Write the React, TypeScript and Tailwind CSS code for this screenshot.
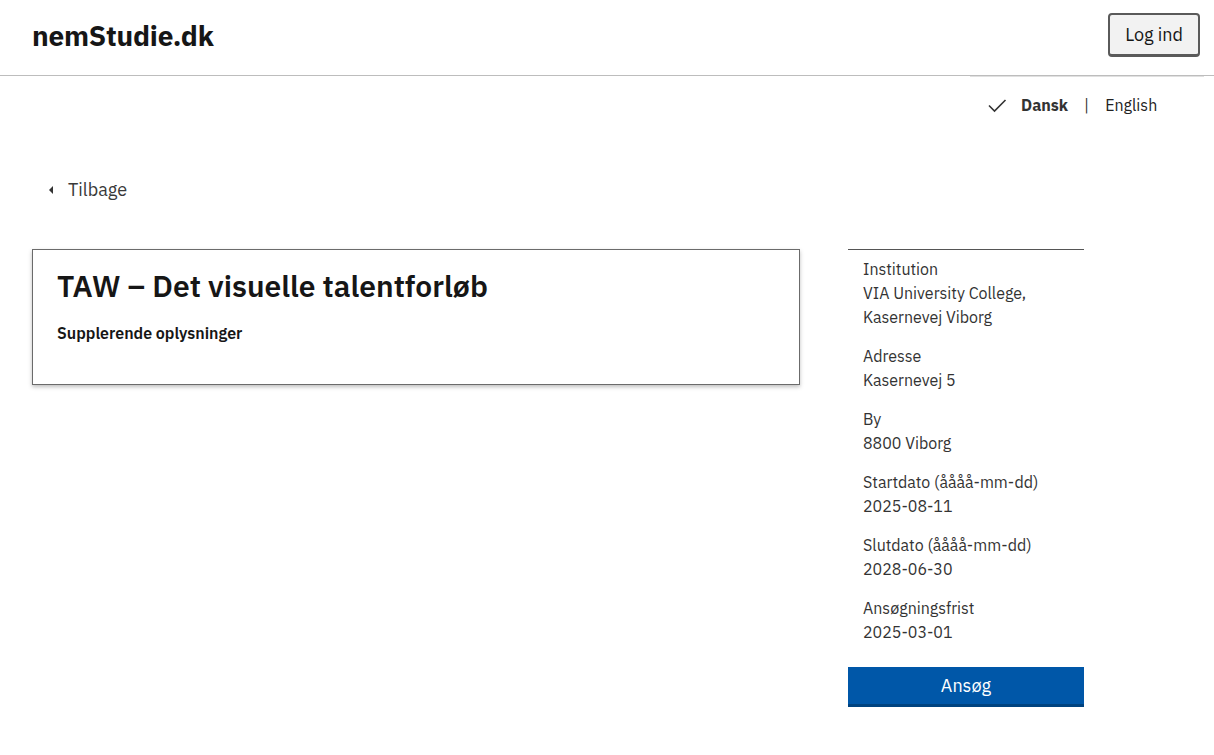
export default function App() {
  const facts = [
    { label: 'Institution', value: ['VIA University College,', 'Kasernevej Viborg'] },
    { label: 'Adresse', value: ['Kasernevej 5'] },
    { label: 'By', value: ['8800 Viborg'] },
    { label: 'Startdato (åååå-mm-dd)', value: ['2025-08-11'] },
    { label: 'Slutdato (åååå-mm-dd)', value: ['2028-06-30'] },
    { label: 'Ansøgningsfrist', value: ['2025-03-01'] },
  ];

  return (
    <div className="min-h-[755px] bg-white text-[#161616] font-['IBM_Plex_Sans','Roboto','Noto_Sans',sans-serif]">
      <header className="h-[76px] border-b border-[#bdbdbd] flex items-center justify-between pl-8 pr-[14px]">
        <h1 className="text-[28px] font-bold tracking-[-0.2px] mt-[-4px]">nemStudie.dk</h1>
        <button className="h-[44px] px-[15px] mt-[-6px] bg-[#f2f2f2] border-2 border-[#5a5a5a] border-b-[3px] rounded-[4px] text-[18px] text-[#161616]">
          Log ind
        </button>
      </header>

      <div className="flex justify-end pr-[10px]">
        <div className="w-[234px] border-t border-[#e0e0e0] pt-[16px] flex items-center text-[16px]">
          <svg width="20" height="20" viewBox="0 0 20 20" className="ml-[17px] mr-[14px]">
            <path d="M2 10.5 L7.5 16 L18.5 5" fill="none" stroke="#333" strokeWidth="1.6" />
          </svg>
          <span className="font-bold text-[#333]">Dansk</span>
          <span className="mx-[16px] text-[#333]">|</span>
          <span className="text-[#222]">English</span>
        </div>
      </div>

      <div className="pl-[48px] mt-[59px] flex items-center text-[18px] text-[#393939]">
        <svg width="6" height="10" viewBox="0 0 6 10" className="mr-[14px]">
          <path d="M5 1 L1 5 L5 9 Z" fill="#333" />
        </svg>
        <span>Tilbage</span>
      </div>

      <div className="flex items-start pl-8 mt-[46px]">
        <section className="w-[768px] h-[136px] border border-[#6b6b6b] shadow-[0_2px_4px_rgba(0,0,0,0.25)] px-6 pt-[16px]">
          <h2 className="text-[30px] font-semibold leading-[40px]">TAW – Det visuelle talentforløb</h2>
          <p className="mt-[15px] text-[16px] font-semibold">Supplerende oplysninger</p>
        </section>

        <aside className="ml-[48px] w-[236px]">
          <div className="border-t border-[#555] pt-[7px] px-[15px] text-[16px] leading-[24px] text-[#333] flex flex-col gap-[15px]">
            {facts.map((f) => (
              <div key={f.label}>
                <div>{f.label}</div>
                {f.value.map((v) => (
                  <div key={v}>{v}</div>
                ))}
              </div>
            ))}
          </div>
          <button className="mt-[23px] w-full h-[40px] bg-[#0057a8] border-b-[3px] border-[#00437f] text-white text-[18px]">
            Ansøg
          </button>
        </aside>
      </div>
    </div>
  );
}
